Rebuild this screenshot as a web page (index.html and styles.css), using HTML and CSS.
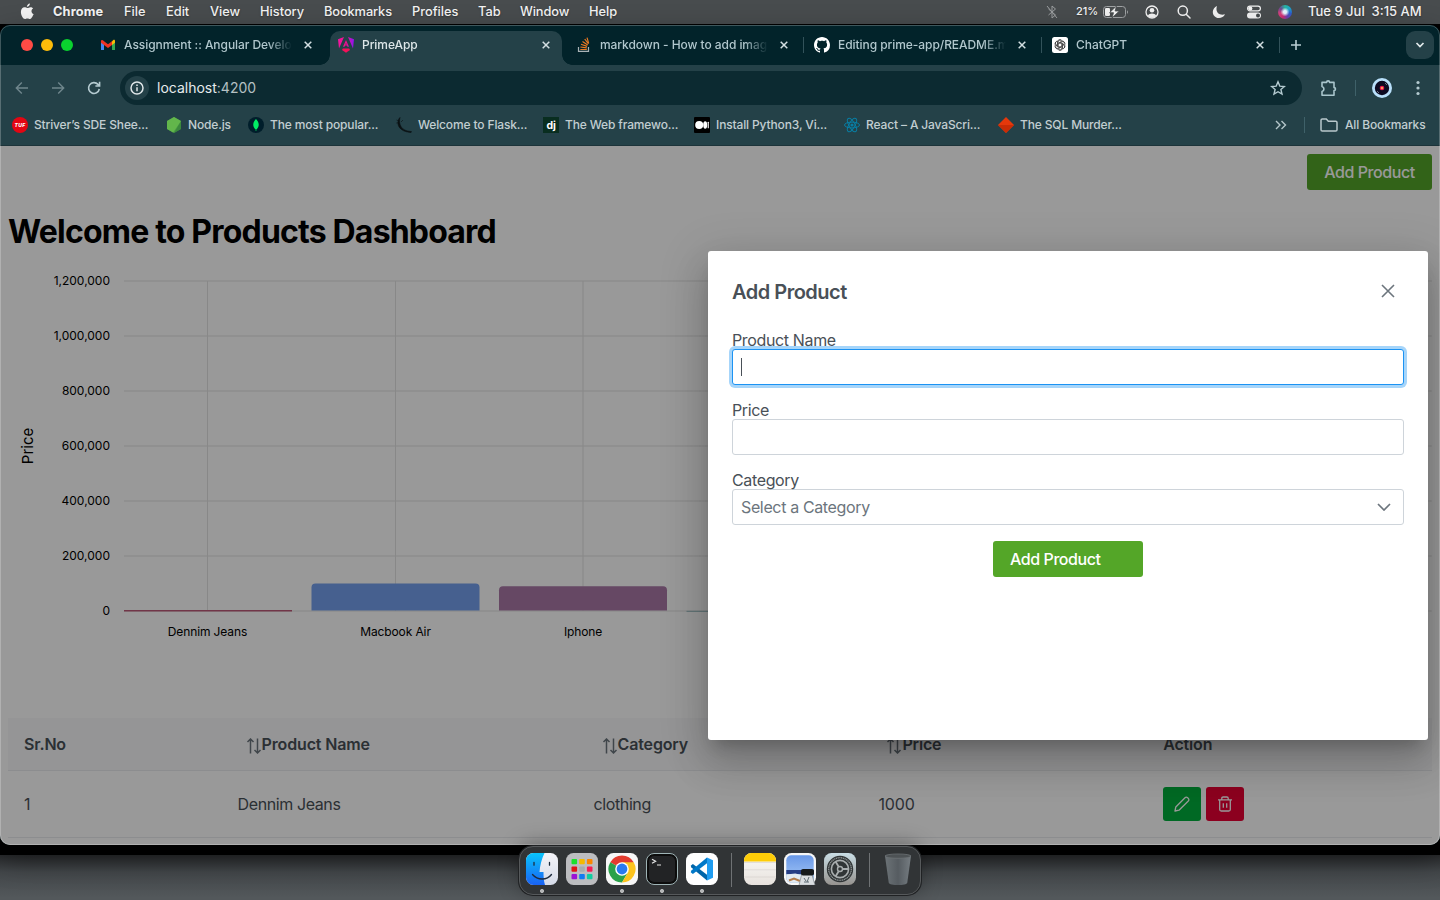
FILE: index.html
```html
<!DOCTYPE html>
<html lang="en">
<head>
<meta charset="utf-8">
<title>PrimeApp</title>
<link rel="stylesheet" href="styles.css">
</head>
<body>
<div class="desktop">
  <header class="menubar">
    <svg class="apple" viewBox="0 0 14 17"><path d="M9.900 0.400c.1 1.700-1.400 3.400-3 3.300C6.700 2.200 8.300.5 9.900.4zM12.900 12.500c-.6 1.500-1.700 3.500-3 3.500-1 0-1.300-.6-2.500-.6s-1.600.6-2.500.6C3.200 16 .9 12.500.9 9 .9 6 2.600 4.300 4.500 4.300c1.200 0 1.900.7 2.900.7s1.600-.8 3.100-.8c1 0 2 .5 2.600 1.400-2.400 1.400-2 4.700.6 5.600z"/></svg>
    <nav class="menus">
      <b>Chrome</b><span>File</span><span>Edit</span><span>View</span><span>History</span><span>Bookmarks</span><span>Profiles</span><span>Tab</span><span>Window</span><span>Help</span>
    </nav>
    <div class="status">
      <svg class="bt" viewBox="0 0 12 14"><path d="M2.500 4l7 6L6 13V1l3.500 3L2.500 10M1 1l10 12"/></svg>
      <span class="pct">21%</span>
      <svg class="batt" viewBox="0 0 26 12"><rect x=".5" y=".5" width="22" height="11" rx="3" fill="none" stroke="#a0a3a5"/><path d="M24 4.200c1.300.5 1.300 3.100 0 3.600z" fill="#a0a3a5"/><rect x="2" y="2" width="5" height="8" rx="1.300" fill="#f2f2f2"/><path d="M13.500 0L6.500 6.700h4L9 12l7.300-7h-4.200z" fill="#f4f4f4" stroke="#484c4e" stroke-width=".8"/></svg>
      <svg class="user" viewBox="0 0 14 14"><circle cx="7" cy="7" r="6" fill="none" stroke="#f2f2f2" stroke-width="1.300"/><circle cx="7" cy="5.300" r="2.300" fill="#f2f2f2"/><path d="M2.800 10.800C4 7.700 10 7.700 11.200 10.800 9.500 13.300 4.500 13.300 2.800 10.800z" fill="#f2f2f2"/></svg>
      <svg class="search" viewBox="0 0 14 14"><circle cx="5.800" cy="5.700" r="4.600"/><path d="M9.200 9.200l3.800 3.800"/></svg>
      <svg class="moon" viewBox="0 0 14 14"><path d="M5 1C3 7 7 11 13 9.300 11 14 4 14.500 1.500 10-.3 6.500 1.500 2.500 5 1z" fill="#f2f2f2"/></svg>
      <svg class="cc" viewBox="0 0 16 14"><rect x="1.600" y="1.100" width="12.800" height="4.800" rx="2.400" fill="none" stroke="#f2f2f2" stroke-width="1.200"/><circle cx="4.300" cy="3.500" r="2.100" fill="#f2f2f2"/><rect x="1" y="7.500" width="14" height="6" rx="3" fill="#f2f2f2"/><circle cx="12" cy="10.500" r="2" fill="#45494b"/></svg>
      <i class="siri"></i>
      <span class="clock">Tue 9 Jul&nbsp; 3:15 AM</span>
    </div>
  </header>

  <main class="window">
    <div class="tabstrip">
      <div class="lights"><i></i><i></i><i></i></div>
      <div class="tab">
        <svg viewBox="0 0 16 16"><path d="M1 4.500V13h3V7z" fill="#4285f4"/><path d="M15 4.500V13h-3V7z" fill="#34a853"/><path d="M12 4.500V8l3-2.300V4c0-1.500-1.700-1.700-3 .5z" fill="#fbbc04"/><path d="M1 4v1.700l3 2.300 4 3 4-3V4.200l-4 3-4-3C2.500 2.500 1 2.800 1 4z" fill="#f03224"/></svg>
        <span class="t">Assignment :: Angular Develo</span><svg class="x" viewBox="0 0 8 8"><path d="M.7.7l6.600 6.600M7.300.7L.7 7.300"/></svg>
      </div>
      <div class="tab active">
        <svg viewBox="0 0 16 16"><defs><linearGradient id="ng" x1="0" y1="0" x2="1" y2="0"><stop offset="0" stop-color="#f514a0"/><stop offset=".5" stop-color="#f0108c"/><stop offset="1" stop-color="#8a14f5"/></linearGradient></defs><path d="M6 0L0 2.200l1 9.300zM10 0l6 2.200-1 9.300zM5 9.800L8 3l3 6.800H9.500L8.900 8.400H7.100l-.6 1.400zM7.500 7.400h1L8 6z" fill="url(#ng)"/><path d="M12 13l-4 2.800L4 13l.8-1.500h6.400z" fill="#f5115a"/></svg>
        <span class="t">PrimeApp</span><svg class="x" viewBox="0 0 8 8"><path d="M.7.7l6.600 6.600M7.300.7L.7 7.300"/></svg>
      </div>
      <div class="tab sep">
        <svg viewBox="0 0 16 16" fill="none"><path d="M2.500 10v4.300h10V10" stroke="#a9b3b6" stroke-width="1.200"/><path d="M4.300 12.500h6.500M4.400 10l6.400.8M5 7.300l6.100 2.100M6.500 4.400l5.200 3.500M8.700 2l3.800 4.900M11 .6l1.700 5.700" stroke="#e87922" stroke-width="1.200"/></svg>
        <span class="t">markdown - How to add imag</span><svg class="x" viewBox="0 0 8 8"><path d="M.7.7l6.600 6.600M7.300.7L.7 7.300"/></svg>
      </div>
      <div class="tab sep">
        <svg viewBox="0 0 16 16"><path fill="#fff" d="M8 0C3.580 0 0 3.580 0 8c0 3.540 2.290 6.530 5.470 7.590.4.070.55-.17.55-.38 0-.19-.01-.82-.01-1.490-2.010.37-2.530-.49-2.690-.94-.09-.23-.48-.94-.82-1.130-.28-.15-.68-.52-.01-.53.63-.01 1.080.58 1.230.82.72 1.210 1.870.87 2.330.66.07-.52.28-.87.51-1.070-1.780-.2-3.640-.89-3.640-3.950 0-.87.31-1.590.82-2.150-.08-.2-.36-1.020.08-2.120 0 0 .67-.21 2.200.82.64-.18 1.320-.27 2-.27s1.360.09 2 .27c1.530-1.040 2.200-.82 2.200-.82.44 1.100.16 1.920.08 2.120.51.56.82 1.270.82 2.150 0 3.070-1.870 3.750-3.650 3.950.29.25.54.73.54 1.480 0 1.070-.01 1.930-.01 2.200 0 .21.15.46.55.38A8.010 8.010 0 0 0 16 8c0-4.420-3.580-8-8-8z"/></svg>
        <span class="t">Editing prime-app/README.m</span><svg class="x" viewBox="0 0 8 8"><path d="M.7.7l6.600 6.600M7.300.7L.7 7.300"/></svg>
      </div>
      <div class="tab sep">
        <svg viewBox="0 0 16 16"><rect width="16" height="16" rx="2.500" fill="#fff"/><g fill="none" stroke="#222" stroke-width=".8" transform="translate(8 8) scale(.9) translate(-8 -8)"><path id="petal" d="M6 8.900V4.800C6 2.300 9.200 1.500 10.500 3.500M6.500 5.700L9.700 3.900c1.500-.8 3.500.3 3.500 2.300"/><use href="#petal" transform="rotate(60 8 8)"/><use href="#petal" transform="rotate(120 8 8)"/><use href="#petal" transform="rotate(180 8 8)"/><use href="#petal" transform="rotate(240 8 8)"/><use href="#petal" transform="rotate(300 8 8)"/></g></svg>
        <span class="t">ChatGPT</span><svg class="x" viewBox="0 0 8 8"><path d="M.7.7l6.600 6.600M7.300.7L.7 7.300"/></svg>
      </div>
      <svg class="plus" viewBox="0 0 12 12"><path d="M6 1v10M1 6h10"/></svg>
      <div class="tabsearch"><svg viewBox="0 0 10 8"><path d="M1.500 2l3.500 3.500L8.500 2"/></svg></div>
    </div>

    <div class="toolbar">
      <svg class="nav dim" viewBox="0 0 14 14"><path d="M13 7H1.500M6.800 1.500L1.300 7l5.500 5.500"/></svg>
      <svg class="nav dim" viewBox="0 0 14 14"><path d="M1 7h11.500M7.200 1.500L12.700 7l-5.500 5.500"/></svg>
      <svg class="nav" viewBox="0 0 14 14"><path d="M12.300 8A5.400 5.400 0 1 1 11 3.400l1.300 1.300M12.600.8v4.200H8.400"/></svg>
      <div class="omnibox">
        <span class="info"><svg viewBox="0 0 14 14"><circle cx="7" cy="7" r="6"/><path d="M7 6.300v4M7 3.600v1.500"/></svg></span>
        <span class="url">localhost<em>:4200</em></span>
        <svg class="star" viewBox="0 0 16 16"><path d="M8 1.800l1.800 4.300 4.600.4-3.500 3 1.100 4.600L8 11.700l-4 2.400 1.100-4.600-3.500-3 4.600-.4z"/></svg>
      </div>
      <svg class="puzzle" viewBox="0 0 18 18"><path d="M2 3.400h4.600a1.500 1.500 0 0 1 3 0H14v5.200a1.500 1.500 0 0 1 0 3V16.300H2v-3.800c2.600-.6 2.600-4.300 0-5z"/></svg>
      <i class="bar"></i>
      <svg class="avatar" viewBox="0 0 20 20"><circle cx="10" cy="10" r="10" fill="#b9e0fb"/><circle cx="10" cy="10" r="7.200" fill="#0d0a22"/><path d="M5 13l2 2M13 5l2 2" stroke="#69707f"/><circle cx="10" cy="10" r="2.300" fill="#e8194f"/><circle cx="10" cy="10" r="1" fill="#ffc15a"/></svg>
      <svg class="dots" viewBox="0 0 4 16"><circle cx="2" cy="2.500" r="1.600"/><circle cx="2" cy="8" r="1.600"/><circle cx="2" cy="13.500" r="1.600"/></svg>
    </div>

    <div class="bookmarks">
      <div class="bm"><svg viewBox="0 0 16 16"><circle cx="8" cy="8" r="8" fill="#e30613"/><text x="8" y="10.300" class="tuf">TUF</text></svg><span>Striver’s SDE Shee...</span></div>
      <div class="bm"><svg viewBox="0 0 16 16"><path d="M8 0l7 4v8l-7 4-7-4V4z" fill="#4c9f45"/><path d="M8 0l7 4-8 11.500L1 12V4z" fill="#6cc04f" opacity=".7"/><path d="M15 4v8l-7 4z" fill="#35803a" opacity=".7"/></svg><span>Node.js</span></div>
      <div class="bm"><svg viewBox="0 0 16 16"><circle cx="8" cy="8" r="8" fill="#001e2b"/><path d="M8 2c3.600 3.600 3.600 8 .3 10.500V14h-.6v-1.500C4.400 10 4.400 5.600 8 2z" fill="#00ed64"/></svg><span>The most popular...</span></div>
      <div class="bm"><svg viewBox="0 0 16 16"><path d="M4 .5C1.500 3 1.500 7 3 9.800c2 3.200 5.500 5 12 5.700l.5-.9c-5-.4-8.500-1.800-10.300-4.700C3.500 7 3 4 4 .5zM.5 3l2.500 1M.3 6l3-.2M5 5l2-2" fill="#0b1214" stroke="#0b1214" stroke-width=".6"/></svg><span>Welcome to Flask...</span></div>
      <div class="bm"><svg viewBox="0 0 16 16"><rect width="16" height="16" fill="#092e20"/><text x="8" y="11.500" class="dj">dj</text></svg><span>The Web framewo...</span></div>
      <div class="bm"><svg viewBox="0 0 16 16"><rect width="16" height="16" rx="1" fill="#000"/><circle cx="5.200" cy="8" r="4" fill="#fff"/><ellipse cx="11.200" cy="8" rx="2" ry="3.700" fill="#fff"/><rect x="13.700" y="4.800" width="1.100" height="6.400" rx=".5" fill="#fff"/></svg><span>Install Python3, Vi...</span></div>
      <div class="bm"><svg viewBox="0 0 16 16" fill="none" stroke="#087ea4"><circle cx="8" cy="8" r="1.600" fill="#087ea4" stroke="none"/><ellipse cx="8" cy="8" rx="7.500" ry="2.900"/><ellipse cx="8" cy="8" rx="7.500" ry="2.900" transform="rotate(60 8 8)"/><ellipse cx="8" cy="8" rx="7.500" ry="2.900" transform="rotate(120 8 8)"/></svg><span>React – A JavaScri...</span></div>
      <div class="bm"><svg viewBox="0 0 16 16"><path d="M8 0l8 8-8 8-8-8z" fill="#e5380b"/><path d="M0 8h16l-8 8z" fill="#c92c06"/></svg><span>The SQL Murder...</span></div>
      <div class="bmend"><svg class="more" viewBox="0 0 12 10"><path d="M1 1l4 4-4 4M6.500 1l4 4-4 4"/></svg><i class="bar"></i><svg class="folder" viewBox="0 0 18 14"><path d="M1 2.300Q1 1 2.300 1h4l2 2.200h7.400Q17 3.200 17 4.500v7.200Q17 13 15.700 13H2.300Q1 13 1 11.700z"/></svg><span>All Bookmarks</span></div>
    </div>

    <section class="page">
      <div class="topline"><button class="btn">Add Product</button></div>
      <h1>Welcome to Products Dashboard</h1>
      <svg class="chart" viewBox="0 0 1424 400">
        <g class="grid">
          <path d="M116 21H1424M116 76H1424M116 131H1424M116 186H1424M116 241H1424M116 296H1424M116 351H1424"/>
          <path d="M199.500 21V351M387.500 21V351M575 21V351M762.500 21V351"/>
        </g>
        <path d="M116 350.800h168" stroke="#bd5a78" stroke-width="1.500"/>
        <path d="M303.500 350.500V327.500q0-4 4-4h160q4 0 4 4v23z" fill="#76a0ee"/>
        <path d="M491 350.500V330.300q0-4 4-4h160q4 0 4 4V350.500z" fill="#aa78a7"/>
        <path d="M678.500 351.300h168" stroke="#94b9bd"/>
        <g class="yl"><text x="102" y="25">1,200,000</text><text x="102" y="80">1,000,000</text><text x="102" y="135">800,000</text><text x="102" y="190">600,000</text><text x="102" y="245">400,000</text><text x="102" y="300">200,000</text><text x="102" y="355">0</text></g>
        <g class="xl"><text x="199.500" y="376">Dennim Jeans</text><text x="387.500" y="376">Macbook Air</text><text x="575" y="376">Iphone</text></g>
        <text class="axis" transform="translate(25 186) rotate(-90)">Price</text>
      </svg>
      <table>
        <thead><tr><th>Sr.No</th><th><svg class="sort" viewBox="0 0 16 16"><path d="M4.500 15.500V1M1.500 4l3-3 3 3M11.500.5V15M8.500 12l3 3 3-3"/></svg>Product Name</th><th><svg class="sort" viewBox="0 0 16 16"><path d="M4.500 15.500V1M1.500 4l3-3 3 3M11.500.5V15M8.500 12l3 3 3-3"/></svg>Category</th><th><svg class="sort" viewBox="0 0 16 16"><path d="M4.500 15.500V1M1.500 4l3-3 3 3M11.500.5V15M8.500 12l3 3 3-3"/></svg>Price</th><th>Action</th></tr></thead>
        <tbody><tr><td>1</td><td>Dennim Jeans</td><td>clothing</td><td>1000</td><td><div class="acts">
          <button class="act edit"><svg viewBox="0 0 16 16"><path d="M1 15l.8-4L11 1.700a1.800 1.800 0 0 1 2.600 0l.7.7a1.800 1.800 0 0 1 0 2.600L5 14.200z"/></svg></button>
          <button class="act del"><svg viewBox="0 0 16 16"><path d="M1 3.800h14M2.700 3.800v9.700q0 1.500 1.500 1.500h7.600q1.500 0 1.500-1.500V3.800M4.800 3.800V2.300Q4.800 1 6.100 1h3.800q1.300 0 1.300 1.300v1.500M6.300 7.200v4.600M9.700 7.200v4.600"/></svg></button>
        </div></td></tr></tbody>
      </table>
      <div class="overlay"></div>
      <div class="dialog">
        <div class="dhead"><h2>Add Product</h2><svg viewBox="0 0 14 14"><path d="M1 1l12 12M13 1L1 13"/></svg></div>
        <label>Product Name</label><div class="field focus"><i class="caret"></i></div>
        <label>Price</label><div class="field"></div>
        <label>Category</label><div class="field select"><span>Select a Category</span><svg viewBox="0 0 14 8"><path d="M1 1l6 6 6-6"/></svg></div>
        <button class="btn submit">Add Product</button>
      </div>
    </section>
  </main>

  <footer class="dock">
    <svg class="run" viewBox="0 0 32 32"><defs><linearGradient id="fb" x1="0" y1="0" x2="0" y2="1"><stop offset="0" stop-color="#09c4fb"/><stop offset="1" stop-color="#1a62f4"/></linearGradient><linearGradient id="fw" x1="0" y1="0" x2="0" y2="1"><stop offset="0" stop-color="#f4f4f8"/><stop offset="1" stop-color="#d5dbe8"/></linearGradient></defs><rect width="32" height="32" rx="7.500" fill="url(#fw)"/><path d="M7.500 0H18.500C15.500 6 14 13 13.500 19h4c0 5 .3 9 1.500 13H7.500A7.500 7.500 0 0 1 0 24.500v-17A7.500 7.500 0 0 1 7.500 0z" fill="url(#fb)"/><path d="M8 9.500v2.700M23.500 9.500v2.700M6.500 21.500c5 6 14.500 6 19 0" stroke="#1d2b3d" stroke-width="1.300" fill="none" stroke-linecap="round"/></svg>
    <svg viewBox="0 0 32 32"><rect width="32" height="32" rx="7.500" fill="#bcbdc0"/><g><rect x="5.500" y="6" width="5.600" height="5.300" rx="1" fill="#19e22c"/><rect x="13.200" y="6" width="5.600" height="5.300" rx="1" fill="#f4b900"/><rect x="20.900" y="6" width="5.600" height="5.300" rx="1" fill="#fb8600"/><rect x="5.500" y="13.500" width="5.600" height="5.300" rx="1" fill="#df1515"/><rect x="13.200" y="13.500" width="5.600" height="5.300" rx="1" fill="#a7acae"/><rect x="20.900" y="13.500" width="5.600" height="5.300" rx="1" fill="#f81c52"/><rect x="5.500" y="21" width="5.600" height="5.300" rx="1" fill="#9b12d5"/><rect x="13.200" y="21" width="5.600" height="5.300" rx="1" fill="#137bf2"/><rect x="20.900" y="21" width="5.600" height="5.300" rx="1" fill="#12cda0"/></g></svg>
    <svg class="run" viewBox="0 0 32 32"><rect width="32" height="32" rx="7.500" fill="#f7f7f7"/><path d="M16 16L4.300 9.200A13.500 13.500 0 0 1 27.700 9.200z" fill="#e33b2e"/><path d="M4.300 9.200A13.500 13.500 0 0 0 16 29.500L21.900 19.400 16 16z" fill="#2aa14a"/><path d="M27.700 9.200A13.500 13.500 0 0 1 16 29.500L21.900 19.400 16 9.200z" fill="#fcc31d"/><circle cx="16" cy="16" r="6.800" fill="#fff"/><circle cx="16" cy="16" r="5.400" fill="#2a7af0"/></svg>
    <svg class="run" viewBox="0 0 32 32"><rect x=".5" y=".5" width="31" height="31" rx="7.500" fill="#0c0c0c" stroke="#9fb4b6"/><rect x="3" y="3" width="26" height="26" rx="5" fill="#222325"/><path d="M6 6.300l3.600 2L6 10.300M11 12h4" stroke="#e6e6e6" stroke-width="1.200" fill="none"/></svg>
    <svg class="run" viewBox="0 0 32 32"><rect width="32" height="32" rx="7.500" fill="#fff"/><path d="M21 4.500l6 2.700v17.600l-6 2.700z" fill="#1f9cf0"/><path d="M4.700 12.700l2.200-1.800 14.100 10.800v5.800L5.400 14.600z" fill="#0065a9"/><path d="M4.700 19.300l2.200 1.800L21 10.300V4.500L5.400 17.400z" fill="#0078c8"/></svg>
    <i class="dsep"></i>
    <svg viewBox="0 0 32 32"><defs><linearGradient id="np" x1="0" y1="0" x2="0" y2="1"><stop offset="0" stop-color="#fbfaf8"/><stop offset="1" stop-color="#e7e2dd"/></linearGradient></defs><rect width="32" height="32" rx="7.500" fill="url(#np)"/><path d="M0 8.500v-1A7.500 7.500 0 0 1 7.500 0h17A7.500 7.500 0 0 1 32 7.500v1z" fill="#fecd08"/><path d="M0 9.500h32M0 16.800h32M0 24h32" stroke="#d4cfca" stroke-width=".6"/></svg>
    <svg viewBox="0 0 32 32"><defs><linearGradient id="sk" x1="0" y1="0" x2="0" y2="1"><stop offset="0" stop-color="#6998e8"/><stop offset="1" stop-color="#a9cbf7"/></linearGradient></defs><rect width="32" height="32" rx="7.500" fill="#f7f7f7"/><rect x="2.300" y="2.300" width="27.400" height="27.400" rx="5" fill="url(#sk)"/><path d="M2.300 17h27.400v4.500H2.300z" fill="#263e84"/><path d="M2.300 21h27.400v8.700H7.300a5 5 0 0 1-5-5z" fill="#8fb4e0"/><path d="M2.300 21.500l9-1 8 2v7.200H7.300a5 5 0 0 1-5-5z" fill="#e3ebf2"/><path d="M5 27.500l5-2 6 2.500" stroke="#b37c4c" stroke-width="2" fill="none"/><path d="M18 20h9.500l3.500 12.300H15z" fill="#d9dde0" stroke="#8b9296" stroke-width=".8"/><path d="M20 25l2 3M25 24l-2 5M20 29h5" stroke="#5d6a72"/><rect x="17" y="16" width="13" height="6.500" rx="2" fill="#15191b"/></svg>
    <svg viewBox="0 0 32 32"><defs><linearGradient id="sg" x1="0" y1="0" x2="0" y2="1"><stop offset="0" stop-color="#c9dde5"/><stop offset="1" stop-color="#96938f"/></linearGradient></defs><rect width="32" height="32" rx="7.500" fill="url(#sg)"/><circle cx="16" cy="16" r="13.200" fill="#303536"/><circle cx="16" cy="16" r="11.300" fill="none" stroke="#8d9394" stroke-width="1.300" stroke-dasharray="1.200 .6"/><circle cx="16" cy="16" r="8.600" fill="none" stroke="#a8adae" stroke-width="1.600"/><circle cx="16" cy="16" r="2.500" fill="none" stroke="#a8adae" stroke-width="1.400"/><path d="M18.500 16h6M14.700 13.800L11.500 8.500M14.700 18.200L11.500 23.500" stroke="#a8adae" stroke-width="1.800"/></svg>
    <i class="dsep"></i>
    <svg class="trash" viewBox="0 0 32 36"><defs><linearGradient id="tg" x1="0" y1="0" x2="1" y2="0"><stop offset="0" stop-color="#6c7377"/><stop offset=".5" stop-color="#565c61"/><stop offset="1" stop-color="#767d82"/></linearGradient></defs><path d="M2.200 3l4 28.500c.5 3.300 19.100 3.300 19.600 0L29.800 3z" fill="url(#tg)"/><ellipse cx="16" cy="3.300" rx="13.800" ry="2.300" fill="#4d5255" stroke="#73797d" stroke-width=".7"/></svg>
  </footer>
</div>
</body>
</html>
```
FILE: styles.css
```css
* { box-sizing: border-box; }
body { margin: 0; font-family: Inter, "Liberation Sans", sans-serif; }
svg { display: block; flex: none; }
i { display: block; flex: none; }
em { font-style: normal; }
button { font: inherit; border: 0; padding: 0; }

.desktop { position: relative; width: 1440px; height: 900px; overflow: hidden; display: flex; flex-direction: column; background: linear-gradient(#000 0, #000 855px, #292b2d 855px, #43474a 872px, #53585b 898px); }

.menubar { height: 24px; flex: none; background: #484c4e; display: flex; align-items: center; color: #f4f4f4; font-size: 13px; font-weight: 500; padding: 0 18px 2px 20px; text-shadow: 0 1px 2px rgba(0,0,0,.35); }
.apple { width: 14px; height: 17px; fill: #f2f2f2; }
.menus { display: flex; margin-left: 19px; white-space: nowrap; }
.menus > * { flex: none; width: 71px; font-size: 12.800px; }
.menus b { font-weight: 700; letter-spacing: .15px; }
.menus :nth-child(2) { width: 42px; }
.menus :nth-child(3) { width: 44px; }
.menus :nth-child(4) { width: 50px; }
.menus :nth-child(5) { width: 64px; }
.menus :nth-child(6) { width: 88px; letter-spacing: -.1px; }
.menus :nth-child(7) { width: 66px; }
.menus :nth-child(8) { width: 42px; }
.menus :nth-child(9) { width: 69px; letter-spacing: -.1px; }
.menus :nth-child(10) { width: 30px; }
.status { margin-left: auto; display: flex; align-items: center; }
.status svg, .siri { position: relative; top: 1px; }
.bt { width: 12px; height: 14px; fill: none; stroke: #9c9fa1; margin-right: 18px; }
.pct { font-size: 11px; width: 27px; letter-spacing: -.05px; }
.batt { width: 26px; height: 12px; margin-right: 16px; }
.user { width: 14px; height: 14px; margin-right: 18px; }
.search { width: 14px; height: 14px; fill: none; stroke: #f2f2f2; stroke-width: 1.500; stroke-linecap: round; margin-right: 21px; }
.moon { width: 14px; height: 14px; margin-right: 20px; }
.cc { width: 16px; height: 14px; margin-right: 16px; }
.siri { width: 14px; height: 14px; border-radius: 50%; background: radial-gradient(circle, #e6f4ff 0 15%, transparent 45%), conic-gradient(#27b7a0, #1ca7c9, #2c5fd0, #6c3fb0, #ce2d73, #d8417e, #6a4a92, #27b7a0); margin-right: 16px; }
.clock { font-size: 13px; width: 114px; white-space: nowrap; letter-spacing: 0; }

.window { height: 820px; flex: none; margin-top: 1px; border-radius: 10px; overflow: hidden; display: flex; flex-direction: column; background: #244148; box-shadow: 0 12px 30px rgba(0,0,0,.45); position: relative; }
.window::after { content: ""; position: absolute; inset: 0; border: 1px solid rgba(255,255,255,.24); border-radius: 10px; pointer-events: none; }

.tabstrip { height: 40px; flex: none; background: #02232a; display: flex; align-items: center; }
.lights { width: 92px; flex: none; display: flex; gap: 8px; padding-left: 21px; }
.lights i { width: 12px; height: 12px; border-radius: 50%; background: #ff4b45; }
.lights i:nth-child(2) { background: #fdbc0a; }
.lights i:nth-child(3) { background: #0ad22f; }
.tab { position: relative; flex: none; width: 238px; height: 34px; margin-top: 6px; padding: 0 0 6px 8px; display: flex; align-items: center; color: #b1c7cd; font-size: 12px; font-weight: 500; }
.tab > svg:first-child { width: 16px; height: 16px; margin-right: 8px; }
.tab .t { width: 172px; margin-right: -6px; margin-top: -2px; white-space: nowrap; letter-spacing: -.06px; -webkit-mask-image: linear-gradient(90deg, #000 144px, transparent 168px); mask-image: linear-gradient(90deg, #000 144px, transparent 168px); }
.x { width: 8px; height: 8px; margin-left: 14px; fill: none; stroke: #d3dfe2; stroke-width: 1.500; }
.active { width: 232px; background: #244148; border-radius: 10px 10px 0 0; color: #dde6e8; margin-right: 6px; }
.active::before, .active::after { content: ""; position: absolute; bottom: 0; width: 10px; height: 10px; left: -10px; background: radial-gradient(circle at 0 0, transparent 9.500px, #244148 10px); }
.active::after { left: auto; right: -10px; background: radial-gradient(circle at 100% 0, transparent 9.500px, #244148 10px); }
.sep::after { content: ""; position: absolute; left: 235px; top: 6px; width: 1px; height: 16px; background: #32525a; }
.plus { width: 12px; height: 12px; margin-left: 8px; fill: none; stroke: #b9ced3; stroke-width: 1.600; }
.tabsearch { width: 28px; height: 28px; margin: 0 6px 0 auto; border-radius: 9px; background: #244148; display: flex; align-items: center; justify-content: center; }
.tabsearch svg { width: 10px; height: 8px; fill: none; stroke: #e2eaec; stroke-width: 1.700; }

.toolbar { height: 46px; flex: none; display: flex; align-items: center; padding-left: 15px; }
.nav { width: 14px; height: 14px; fill: none; stroke: #b4cad0; stroke-width: 1.600; margin-right: 22px; }
.dim { stroke: #6f868c; stroke-width: 1.400; }
.nav:nth-child(3) { margin-right: 19px; }
.omnibox { width: 1182px; height: 34px; border-radius: 17px; background: #0c2a31; display: flex; align-items: center; padding: 0 16px 0 5px; }
.info { width: 24px; height: 24px; border-radius: 50%; background: #244148; display: flex; align-items: center; justify-content: center; }
.info svg { width: 14px; height: 14px; fill: none; stroke: #e0e7e9; stroke-width: 1.500; }
.url { margin: -1px 0 0 8px; font-size: 14px; color: #e6ebec; letter-spacing: 0; }
.url em { color: #b5c0c3; }
.star { width: 16px; height: 16px; margin-left: auto; fill: none; stroke: #b4cad0; stroke-width: 1.400; }
.puzzle { width: 18px; height: 18px; margin-left: 18px; fill: none; stroke: #a9c5cc; stroke-width: 1.600; stroke-linejoin: round; }
.bar { width: 1px; height: 16px; background: #3f6169; }
.toolbar .bar { margin: 0 16px 0 17px; }
.avatar { width: 20px; height: 20px; }
.dots { width: 4px; height: 16px; margin-left: 24px; fill: #b4cad0; }

.bookmarks { height: 35px; flex: none; padding: 0 15px 7px 12px; display: flex; align-items: center; color: #c2ced1; font-size: 12px; font-weight: 500; letter-spacing: -.14px; border-bottom: 1px solid #1d343a; white-space: nowrap; }
.bm { display: flex; align-items: center; gap: 6px; width: 154px; flex: none; }
.bm svg { width: 16px; height: 16px; }
.bm:nth-child(2) { width: 82px; }
.bm:nth-child(3) { width: 148px; }
.bm:nth-child(4) { width: 147px; }
.bm:nth-child(5) { width: 151px; }
.bm:nth-child(6) { width: 150px; }
.bm:nth-child(8) { width: 130px; }
.tuf { font: italic 800 5px Inter, sans-serif; fill: #fff; text-anchor: middle; letter-spacing: .4px; }
.dj { font: 700 10.500px Inter, sans-serif; fill: #fff; text-anchor: middle; }
.bmend { margin-left: auto; display: flex; align-items: center; }
.more { width: 12px; height: 10px; fill: none; stroke: #b4c6ca; stroke-width: 1.400; margin-right: 17px; }
.folder { width: 18px; height: 14px; fill: none; stroke: #b9c8cc; stroke-width: 1.500; margin: 0 7px 0 15px; }
.bmend span { width: 80px; }

.page { position: relative; flex: 1; background: #fff; padding: 8px; overflow: hidden; color: #495057; font-size: 16px; }
.topline { display: flex; justify-content: flex-end; }
.btn { display: block; height: 36px; width: 125px; border-radius: 3px; background: #54a628; color: #fff; font-size: 16px; letter-spacing: -.43px; font-weight: 500; text-align: center; }
h1 { margin: 22px 0 0; color: #000; font-size: 32px; line-height: 40px; letter-spacing: -.81px; font-weight: 700; white-space: nowrap; }
.chart { width: 1424px; height: 400px; margin-top: 8px; }
.grid { stroke: #e3e3e3; fill: none; }
.chart text { font: 12px Inter, sans-serif; fill: #000; }
.yl text { text-anchor: end; }
.xl text, .chart .axis { text-anchor: middle; }
.chart .xl text { letter-spacing: -.12px; }
.chart .axis { font-size: 15px; }
table { width: 1424px; margin-top: 58px; border-collapse: separate; border-spacing: 0; table-layout: fixed; }
th, td { text-align: left; padding: 0 16px; border-bottom: 1px solid #e9ecef; white-space: nowrap; }
th { height: 53px; background: #f8f9fa; font-weight: 600; letter-spacing: -.16px; }
td { height: 67px; letter-spacing: -.4px; }
td:nth-child(4) { letter-spacing: -.15px; }
th:nth-child(1) { width: 15%; }
th:nth-child(2) { width: 25%; }
.sort { display: inline-block; width: 16px; height: 16px; margin-left: 8px; vertical-align: -4px; fill: none; stroke: #6c757d; stroke-width: 1.500; }
.acts { display: flex; gap: 5px; }
.act { width: 38px; height: 34px; border-radius: 3px; display: flex; align-items: center; justify-content: center; background: #00b03c; }
.del { background: #ea0034; }
.act svg { width: 16px; height: 16px; fill: none; stroke: #fff; stroke-width: 1.300; stroke-linejoin: round; }
.overlay { position: absolute; inset: 0; background: rgba(0,0,0,.4); }

.dialog { position: absolute; left: 708px; top: 105px; width: 720px; height: 489px; background: #fff; border-radius: 3px; padding: 24px; box-shadow: 0 11px 15px -7px rgba(0,0,0,.2), 0 24px 38px 3px rgba(0,0,0,.14), 0 9px 46px 8px rgba(0,0,0,.12); }
.dhead { height: 34px; display: flex; justify-content: space-between; align-items: center; padding-right: 9px; margin-bottom: 20px; }
h2 { margin: 0; font-size: 20px; font-weight: 600; letter-spacing: -.5px; }
.dhead svg { width: 14px; height: 14px; margin-bottom: 2px; fill: none; stroke: #6c757d; stroke-width: 1.600; }
.dialog label { display: block; height: 20px; line-height: 22px; letter-spacing: -.36px; }
.field { height: 36px; border: 1px solid #ced4da; border-radius: 3px; margin-bottom: 14px; padding: 0 12px 0 8px; display: flex; align-items: center; background: #fff; color: #6c757d; letter-spacing: -.36px; }
.focus { border-color: #1c93f3; box-shadow: 0 0 0 3px #a6d5fa; }
.caret { width: 1px; height: 18px; background: #495057; }
.select { justify-content: space-between; margin-bottom: 16px; }
.select svg { width: 14px; height: 8px; fill: none; stroke: #6c757d; stroke-width: 1.700; }
.submit { width: 150px; margin-left: 261px; text-align: left; padding-left: 17px; }

.dock { position: absolute; left: 519px; top: 846px; width: 402px; height: 49px; border-radius: 14px; border: 1px solid #56595b; background: #313436; display: flex; align-items: flex-start; padding: 6px 6px 0; gap: 8px; box-shadow: 0 0 0 1px #202224, 0 -2px 20px rgba(0,0,0,.35); }
.dock svg { width: 32px; height: 32px; }
.dock .trash { height: 34px; margin-left: 0; }
.dock .run { height: 40px; overflow: visible; padding-bottom: 8px; background: radial-gradient(circle at 16px 38px, #b5b7b8 0 1.700px, transparent 2.300px); }
.dsep { width: 1px; height: 34px; background: #6f7274; margin: 0 4px 0 5px; }
```
